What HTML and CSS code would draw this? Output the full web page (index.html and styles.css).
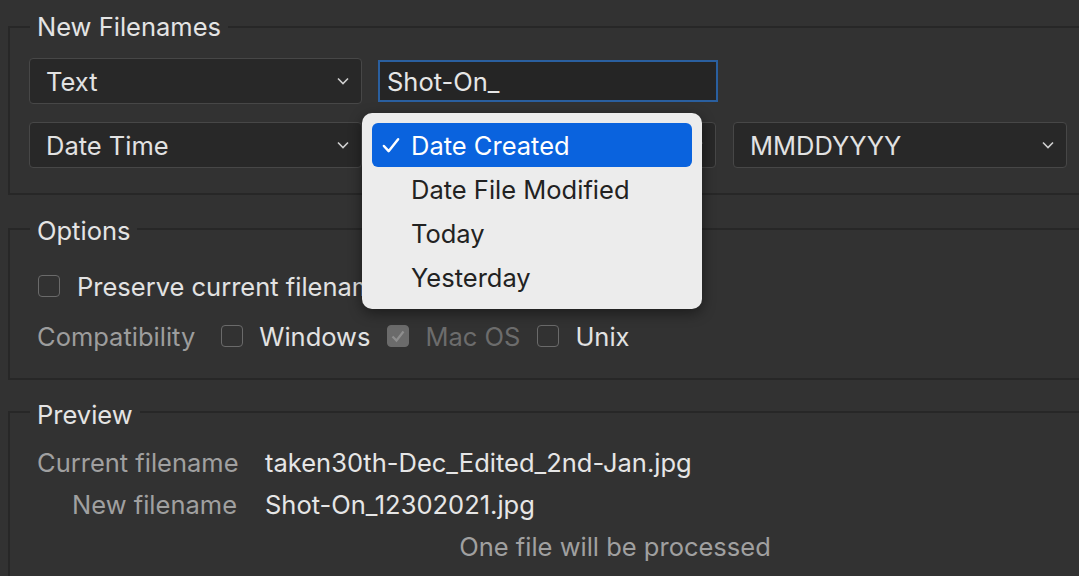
FILE: index.html
```html
<!DOCTYPE html>
<html>
<head>
<meta charset="utf-8">
<link rel="stylesheet" href="styles.css">
</head>
<body>
<div class="page">
  <fieldset class="group">
    <legend>New Filenames</legend>
    <div class="inner names">
      <div class="grid">
        <div class="select"><span>Text</span><svg class="chev" viewBox="0 0 12 8"><path d="M1 1.5 L6 6.5 L11 1.5"/></svg></div>
        <div class="input-wrap"><div class="input">Shot-On_</div></div>
        <div class="spacer"></div>
        <div class="select"><span>Date Time</span><svg class="chev" viewBox="0 0 12 8"><path d="M1 1.5 L6 6.5 L11 1.5"/></svg></div>
        <div class="select"><span></span><svg class="chev" viewBox="0 0 12 8"><path d="M1 1.5 L6 6.5 L11 1.5"/></svg></div>
        <div class="select"><span>MMDDYYYY</span><svg class="chev" viewBox="0 0 12 8"><path d="M1 1.5 L6 6.5 L11 1.5"/></svg></div>
      </div>
    </div>
  </fieldset>

  <fieldset class="group group-options">
    <legend class="legend-low">Options</legend>
    <div class="inner options">
      <div class="opt-row first">
        <span class="cb"></span><span class="lbl clip">Preserve current filename</span>
      </div>
      <div class="opt-row compat">
        <span class="muted">Compatibility</span>
        <span class="cb"></span><span class="lbl">Windows</span>
        <span class="cb checked"><svg viewBox="0 0 22 22"><path d="M5.5 11.5 L9.5 15.5 L16.5 6.5"/></svg></span><span class="lbl disabled">Mac OS</span>
        <span class="cb"></span><span class="lbl">Unix</span>
      </div>
    </div>
  </fieldset>

  <fieldset class="group group-preview">
    <legend class="legend-lower">Preview</legend>
    <div class="inner preview-wrap">
      <div class="preview">
        <span class="plabel">Current filename</span><span class="pval">taken30th-Dec_Edited_2nd-Jan.jpg</span>
        <span class="plabel">New filename</span><span class="pval">Shot-On_12302021.jpg</span>
        <span></span><span class="pnote">One file will be processed</span>
      </div>
    </div>
  </fieldset>
</div>

<div class="menu">
  <div class="item active"><svg class="check" viewBox="0 0 20 20"><path d="M2.5 10.5 L7.5 16 L17.5 3.5"/></svg>Date Created</div>
  <div class="item">Date File Modified</div>
  <div class="item">Today</div>
  <div class="item">Yesterday</div>
</div>
</body>
</html>
```

FILE: styles.css
```css
html, body {
  margin: 0;
  padding: 0;
  background: #323232;
  overflow: hidden;
  width: 1079px;
  height: 576px;
}
body {
  font-family: "Inter", "Noto Sans", sans-serif;
  font-size: 25.5px;
  color: #e2e2e2;
  position: relative;
}
.page {
  padding-top: 12px;
}
.group {
  margin: 0 -40px 0 8px;
  border: 2px solid #272727;
  border-right: none;
  padding: 0;
}
legend {
  margin-left: 20px;
  padding: 0 7px;
  line-height: 30px;
  color: #e4e4e4;
}
legend.legend-low {
  padding-top: 4px;
}
legend.legend-lower {
  padding-top: 6px;
}
.names {
  padding: 16px 0 25px 19px;
}
.grid {
  display: grid;
  grid-template-columns: 333px 337px 334px;
  column-gap: 17px;
  row-gap: 18px;
  align-items: center;
}
.select {
  height: 46px;
  box-sizing: border-box;
  border: 1px solid #474747;
  border-radius: 4px;
  background: #282828;
  display: flex;
  align-items: center;
  justify-content: space-between;
  padding: 0 12px 0 16px;
  color: #e2e2e2;
}
.chev {
  width: 12px;
  height: 8px;
  fill: none;
  stroke: #cfcfcf;
  stroke-width: 1.6;
}
.input-wrap {
  margin-left: -1px;
  width: 340px;
}
.input {
  height: 42px;
  box-sizing: border-box;
  border: 2px solid #2a5f9f;
  background: #252525;
  padding: 0 7px;
  display: flex;
  align-items: center;
  color: #e6e6e6;
}
.group-options {
  margin-top: 17px;
}
.options {
  padding: 15px 0 17px 27px;
}
.opt-row {
  display: flex;
  align-items: center;
  height: 50px;
}
.opt-row.first .cb {
  margin-left: 1px;
}
.cb {
  width: 22px;
  height: 22px;
  box-sizing: border-box;
  border: 1.5px solid #6a6a6a;
  border-radius: 4px;
  display: inline-flex;
  flex: none;
}
.cb.checked {
  background: #6b6b6b;
  border-color: #6b6b6b;
}
.cb.checked svg {
  width: 22px;
  height: 22px;
  margin: -1.5px;
  fill: none;
  stroke: #8e8e8e;
  stroke-width: 2.2;
}
.lbl {
  margin-left: 16px;
  white-space: nowrap;
}
.lbl.clip {
  margin-left: 17px;
  display: inline-block;
  width: 285px;
  overflow: hidden;
}
.lbl.disabled {
  color: #6c6c6c;
}
.muted {
  color: #9d9d9d;
  margin-right: 26px;
}
.compat .lbl {
  margin-right: 17px;
}
.group-preview {
  margin-top: 14px;
  height: 220px;
}
.preview-wrap {
  padding: 11px 0 30px 27px;
}
.preview {
  display: grid;
  grid-template-columns: 200px 700px;
  column-gap: 28px;
  grid-auto-rows: 42px;
  align-items: center;
}
.plabel {
  color: #a0a0a0;
  text-align: right;
  white-space: nowrap;
}
.pval {
  color: #e6e6e6;
  white-space: nowrap;
}
.pnote {
  color: #a0a0a0;
  text-align: center;
}
.menu {
  position: absolute;
  left: 362px;
  top: 113px;
  width: 340px;
  box-sizing: border-box;
  padding: 10px;
  background: #ececec;
  border-radius: 10px;
  box-shadow: 0 4px 14px rgba(0,0,0,0.45);
  color: #222;
}
.item {
  height: 44px;
  display: flex;
  align-items: center;
  padding-left: 39px;
  border-radius: 6px;
  position: relative;
}
.item.active {
  background: #0a63de;
  color: #fff;
}
.check {
  position: absolute;
  left: 9px;
  top: 13px;
  width: 20px;
  height: 19px;
  fill: none;
  stroke: #fff;
  stroke-width: 2.6;
  stroke-linecap: round;
  stroke-linejoin: round;
}
```
